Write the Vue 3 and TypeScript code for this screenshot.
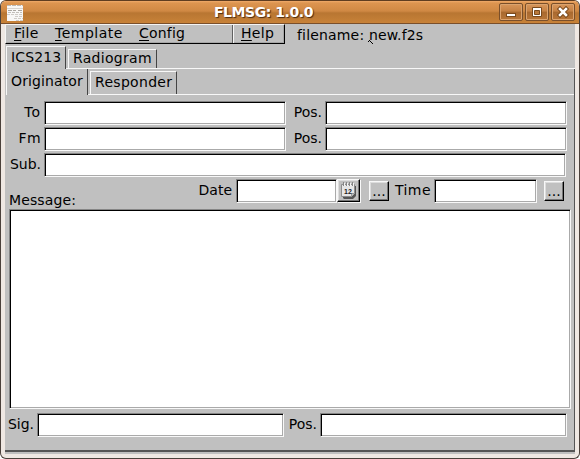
<script setup lang="ts">
import { ref } from 'vue'

interface Menu { key: string; rest: string; name: string }

const menus: Menu[] = [
  { key: 'F', rest: 'ile', name: 'file' },
  { key: 'T', rest: 'emplate', name: 'template' },
  { key: 'C', rest: 'onfig', name: 'config' },
  { key: 'H', rest: 'elp', name: 'help' },
]
const filename = ref('new.f2s')
const to = ref('')
const toPos = ref('')
const from = ref('')
const fromPos = ref('')
const subject = ref('')
const date = ref('')
const time = ref('')
const message = ref('')
const signature = ref('')
const signaturePos = ref('')
</script>

<template>
  <div class="window">
    <header class="titlebar">
      <svg class="app-icon" width="16" height="16" shape-rendering="crispEdges">
        <rect width="16" height="16" fill="#f8f7f6" />
        <path d="M0 0.5h16" stroke="#bdb9b5" stroke-dasharray="4 1" />
        <path d="M0 3.5h16" stroke="#d6d3d0" />
        <path d="M1 5.5h4M6 5.5h3M11 5.5h4" stroke="#aaa59f" />
        <path d="M1 7.5h14" stroke="#c2beba" stroke-dasharray="3 1" />
        <path d="M0 9.5h16M8 11.5h8M7 13.5h9M9 15.5h7" stroke="#cfcbc7" stroke-dasharray="3 1" />
      </svg>
      <h1 class="title">FLMSG: 1.0.0</h1>
      <div class="controls">
        <button class="control" aria-label="Minimize">
          <svg width="22" height="16"><rect x="6.5" y="9.5" width="9" height="3" fill="#fff" stroke="#7a4a1d" /></svg>
        </button>
        <button class="control" aria-label="Maximize">
          <svg width="22" height="16"><path d="M6.5 3.5h9v9h-9z" fill="#fff" stroke="#7a4a1d" /><path d="M8.5 6.5h5v4h-5z" fill="#b9783a" stroke="#7a4a1d" /></svg>
        </button>
        <button class="control" aria-label="Close">
          <svg width="22" height="16"><path d="M8 5l6 6m0-6l-6 6" stroke="#7a4a1d" stroke-width="4.5" stroke-linecap="square" /><path d="M8 5l6 6m0-6l-6 6" stroke="#fff" stroke-width="2.5" stroke-linecap="square" /></svg>
        </button>
      </div>
    </header>

    <main class="client">
      <div class="top">
        <nav class="menubar">
          <span v-for="m in menus" :key="m.name" class="menu" :class="m.name"><span class="key">{{ m.key }}</span>{{ m.rest }}</span>
        </nav>
        <div class="filename">filename: {{ filename }}
          <svg class="pointer" width="6" height="5" shape-rendering="crispEdges"><path d="M1 0h1v1H1zM0 1h1v1H0zM2 1h1v1H2zM3 2h1v1H3zM4 3h1v1H4z" fill="#000" /></svg>
        </div>
      </div>

      <div class="tabs outer">
        <div class="tab active ics">ICS213</div>
        <div class="tab radiogram">Radiogram</div>
        <div class="rule"></div>
      </div>
      <section class="panel">
        <div class="tabs inner">
          <div class="tab active originator">Originator</div>
          <div class="tab responder">Responder</div>
          <div class="rule"></div>
        </div>

        <div class="form">
          <div class="row">
            <label class="lead to">To</label><input v-model="to" class="field half">
            <label class="pos">Pos.</label><input v-model="toPos" class="field half">
          </div>
          <div class="row">
            <label class="lead fm">Fm</label><input v-model="from" class="field half">
            <label class="pos">Pos.</label><input v-model="fromPos" class="field half">
          </div>
          <div class="row">
            <label class="lead">Sub.</label><input v-model="subject" class="field full">
          </div>
          <div class="row stamp">
            <label class="message-label">Message:</label>
            <label class="date-label">Date</label><input v-model="date" class="field date">
            <button class="button calendar" aria-label="Pick date">
              <svg width="18" height="18">
                <path d="M3 4h13v10l-3 3H4l-1-1z" fill="#555" />
                <path d="M1.5 2.5h13v9l-3 3h-10z" fill="#e6e6e6" stroke="#8c8c8c" />
                <path d="M11.5 14.5v-3h3" fill="#c4c4c4" stroke="#999" />
                <path d="M3.5 0v4m3-4v4m3-4v4m3-4v4" stroke="#858585" />
                <path d="M4.5 1v3m3-3v3m3-3v3m3-3v3" stroke="#f4f4f4" />
                <text x="4" y="11.5" font-size="7" font-weight="700" font-family="Liberation Sans, sans-serif" fill="#222">12</text>
              </svg>
            </button>
            <button class="button dots date-now">...</button>
            <label class="time-label">Time</label><input v-model="time" class="field time">
            <button class="button dots time-now">...</button>
          </div>
          <textarea v-model="message" class="field message"></textarea>
          <div class="row signature">
            <label class="sig">Sig.</label><input v-model="signature" class="field signer">
            <label class="sig-pos">Pos.</label><input v-model="signaturePos" class="field signer-pos">
          </div>
        </div>
      </section>
    </main>
  </div>
</template>

<style>
body { margin: 0; background: #fff; overflow: hidden; }
</style>

<style scoped>
* { box-sizing: border-box; }
.window {
  width: 580px; height: 459px; display: flex; flex-direction: column;
  border: 1px solid #4b413b; border-top-color: #5f3d20; border-radius: 6px;
  background: #efe8e3; overflow: hidden;
  font: 14px/18px "DejaVu Sans", sans-serif; color: #000;
}
.titlebar {
  flex: none; height: 23px; display: flex; align-items: flex-start; padding-left: 6px;
  background: linear-gradient(#f0aa6a 0, #dd9550 2px, #d08944 10px, #b87632 12px, #c88238 22px);
  border-bottom: 1px solid #7a4f2a;
}
.app-icon { margin-top: 4px; }
.title {
  margin: 1px 0 0 191px; width: 120px; font-size: 14px; line-height: 20px; font-weight: 700;
  letter-spacing: -0.45px;
  color: #fff; text-shadow: 1px 1px 1px #4c2b10; white-space: nowrap;
}
.controls { display: flex; gap: 2px; margin: 2px 4px 0 auto; }
.control {
  width: 24px; height: 18px; padding: 0; border: 1px solid #7a4f2a; border-radius: 2px;
  background: linear-gradient(#d8965a, #c58144 45%, #a8692f 50%, #b97638);
  box-shadow: inset 0 0 0 1px #dba36e; display: flex;
}
.client { width: 570px; flex: none; height: 430px; margin-left: 4px; background: #c0c0c0; }
.top { display: flex; height: 22px; }
.menubar {
  width: 280px; height: 20px; display: flex; border: 1px solid #000;
  border-top-color: #f4f4f4; border-left-color: #f4f4f4;
  box-shadow: inset -1px -1px #a6a6a6; line-height: 17px;
}
.menu { padding-left: 8px; white-space: nowrap; }
.key { text-decoration: underline; text-underline-offset: 2px; text-decoration-thickness: 1px; }
.file { width: 41px; letter-spacing: .3px; }
.template { width: 84px; letter-spacing: .5px; }
.config { width: 101px; letter-spacing: .2px; }
.help { width: 52px; border-left: 1px solid #606060; box-shadow: inset 1px 0 #f4f4f4; letter-spacing: .3px; }
.filename { margin: 2px 0 0 12px; white-space: nowrap; position: relative; letter-spacing: .17px; }
.pointer { position: absolute; left: 71px; top: 14px; }
.tabs { display: flex; align-items: flex-end; gap: 2px; height: 23px; position: relative; }
.tab {
  border: 1px solid #f8f8f8; border-right: 1px solid #444; border-bottom: 0;
  height: 20px; padding-left: 4px; white-space: nowrap; line-height: 17px;
}
.tab.active { height: 23px; line-height: 21px; border-bottom: 0; }
.outer { padding-left: 1px; }
.ics { width: 60px; letter-spacing: .15px; }
.radiogram { width: 89px; letter-spacing: .3px; }
.rule { position: absolute; bottom: 0; height: 1px; right: 0; background: #f8f8f8; }
.outer .rule { left: 61px; }
.panel { height: 383px; border-right: 1px solid #555; border-bottom: 2px solid #555; }
.inner { height: 26px; padding-left: 1px; }
.inner .active { height: 26px; width: 82px; line-height: 24px; border-top: 0; letter-spacing: .12px; }
.tab.responder { width: 87px; height: 24px; line-height: 21px; letter-spacing: .3px; }
.inner .rule { left: 83px; }
.form { padding: 6px 0 0; display: flex; flex-direction: column; }
.row { display: flex; align-items: center; height: 24px; margin-bottom: 2px; }
label { flex: none; white-space: nowrap; text-align: right; padding-bottom: 2px; }
.field {
  display: block; flex: none; height: 24px; padding: 0 3px; margin: 0; border-radius: 0;
  border: 1px solid #858585; border-right-color: #f8f8f8; border-bottom-color: #f8f8f8;
  background: #fff; box-shadow: inset 1px 1px #000, inset -1px -1px #aaa;
  outline: none; resize: none; font: inherit;
}
.lead { width: 36px; margin-right: 3px; }
.to { letter-spacing: 1px; }
.fm { letter-spacing: .4px; }
.half { width: 242px; }
.pos { width: 36px; margin-right: 3px; }
.full { width: 522px; }
.stamp { height: 30px; align-items: flex-start; margin: 0; }
.message-label { width: 67px; margin: 12px 0 0 4px; padding: 0; text-align: left; letter-spacing: .12px; }
.date-label { width: 156px; margin: 2px 4px 0 0; }
.date { width: 101px; }
.button {
  flex: none; padding: 0; border: 1px solid #000; border-top-color: #f8f8f8; border-left-color: #f8f8f8;
  background: #c0c0c0; box-shadow: inset -1px -1px #777, inset 1px 1px #ddd; border-radius: 0; color: #000;
}
.calendar {
  display: flex; width: 23px; height: 23px; padding: 2px; margin-right: 1px;
  box-shadow: inset -1px -1px #777, inset 1px 1px #ddd, 1px 1px #f8f8f8;
}
.calendar svg { flex: none; }
.dots { width: 20px; height: 20px; margin-top: 2px; font: 14px/18px "DejaVu Sans", sans-serif; }
.date-now { margin-left: 8px; }
.time-label { width: 42px; margin: 2px 3px 0 0; letter-spacing: .45px; }
.time { width: 103px; }
.time-now { margin-left: 7px; }
.message { width: 562px; height: 200px; margin-left: 4px; }
.signature { margin-top: 4px; }
.sig { width: 29px; margin-right: 3px; }
.signer { width: 247px; }
.sig-pos { width: 33px; margin-right: 3px; }
.signer-pos { width: 247px; }
</style>
